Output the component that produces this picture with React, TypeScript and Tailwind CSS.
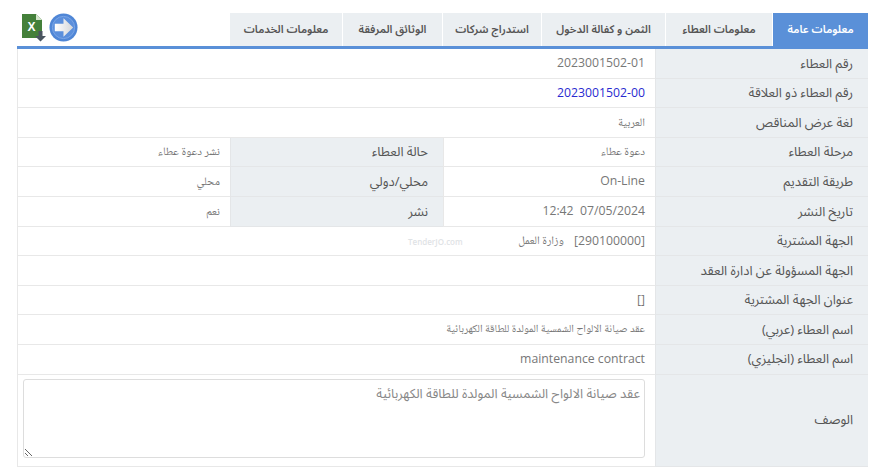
const tabs = [
  { label: 'معلومات عامة', width: 'w-[96px]', active: true },
  { label: 'معلومات العطاء', width: 'w-[107px]' },
  { label: 'الثمن و كفالة الدخول', width: 'w-[124px]' },
  { label: 'استدراج شركات', width: 'w-[99px]' },
  { label: 'الوثائق المرفقة', width: 'w-[100px]' },
  { label: 'معلومات الخدمات', width: 'w-[113px]' },
]

const label = 'flex items-center bg-[#ebeff2] pr-[15px] text-[13px] text-[#555] border-b border-l border-[#e4e6e8]'
const cell = 'flex items-center px-[10px] text-[12.25px] text-[#777] border-b border-l border-[#e8e8e8]'
const small = 'pt-[2px] text-[11.5px] text-[#777] font-["Noto_Naskh_Arabic",serif]'

function ExcelIcon() {
  return (
    <svg width="25" height="29" viewBox="0 0 25 29">
      <path d="M0 1h14l6 6v18H0z" fill="#44803a" />
      <path d="M14 1v6h6z" fill="#d5e6cd" />
      <text x="5.500" y="18" fill="#fff" fontSize="12" fontWeight="700" fontFamily="Liberation Sans">X</text>
      <path d="M16.500 18h4v5h3.500l-5.500 5.500L13 23h3.500z" fill="#4a5560" />
    </svg>
  )
}

function ArrowIcon() {
  return (
    <svg width="29" height="29" viewBox="0 0 30 30">
      <defs>
        <linearGradient id="arrow-fill" x1="0" y1="0" x2="1" y2="0">
          <stop offset="0" stopColor="#ffffff" />
          <stop offset="1" stopColor="#d4d6da" />
        </linearGradient>
      </defs>
      <circle cx="15" cy="15" r="14.500" fill="#4f86d6" />
      <circle cx="15" cy="15" r="11.500" fill="#5b8fdc" stroke="#7ba6e6" strokeWidth="1" />
      <path d="M6 11h9V5.500L25 15l-10 9.500V19H6z" fill="url(#arrow-fill)" />
    </svg>
  )
}

function Row({ name, children, className = 'h-[29.6px]', cellClass = '' }: { name: string; children?: React.ReactNode; className?: string; cellClass?: string }) {
  return (
    <div className={`grid grid-cols-[213px_1fr] ${className}`}>
      <div className={label}>{name}</div>
      <div className={`${cell} ${cellClass}`}>{children}</div>
    </div>
  )
}

function FourRow({ name, value, name2, value2 }: { name: string; value: React.ReactNode; name2: string; value2: string }) {
  return (
    <div className="grid h-[29.6px] grid-cols-[213px_212px_213px_1fr]">
      <div className={label}>{name}</div>
      <div className={cell}>{value}</div>
      <div className={label}>{name2}</div>
      <div className={cell}><span className={small}>{value2}</span></div>
    </div>
  )
}

export default function App() {
  return (
    <div dir="rtl" className='relative h-[475px] w-[870px] overflow-hidden bg-white pr-[2px] pl-[17px] pt-[13px] font-["Open_Sans","Noto_Sans_Arabic",sans-serif]'>
      {/* tabs */}
      <div className="flex h-[36px] border-b-[3px] border-[#5a90d8]">
        {tabs.map((t) => (
          <div
            key={t.label}
            className={`${t.width} flex items-center justify-center border-l border-white text-[11px] font-semibold ${
              t.active ? 'bg-[#5a90d8] text-white' : 'bg-[#ebeff2] text-[#555]'
            }`}
          >
            {t.label}
          </div>
        ))}
        <div dir="ltr" className="flex flex-1 items-start justify-end">
          <div className="mr-auto ml-[5px] flex items-start gap-[2px]">
            <ExcelIcon />
            <ArrowIcon />
          </div>
        </div>
      </div>

      {/* details */}
      <div>
        <Row name="رقم العطاء">2023001502-01</Row>
        <Row name="رقم العطاء ذو العلاقة"><span className="text-[#2a2ad0]">2023001502-00</span></Row>
        <Row name="لغة عرض المناقص"><span className={small}>العربية</span></Row>
        <FourRow name="مرحلة العطاء" value={<span className={small}>دعوة عطاء</span>} name2="حالة العطاء" value2="نشر دعوة عطاء" />
        <FourRow name="طريقة التقديم" value="On-Line" name2="محلي/دولي" value2="محلي" />
        <FourRow name="تاريخ النشر" value={<span dir="ltr">12:42&nbsp;&nbsp;07/05/2024</span>} name2="نشر" value2="نعم" />
        <Row name="الجهة المشترية" cellClass="gap-[10px]">
          <span>[290100000]</span>
          <span className={small}>وزارة العمل</span>
        </Row>
        <Row name="الجهة المسؤولة عن ادارة العقد" />
        <Row name="عنوان الجهة المشترية">[]</Row>
        <Row name="اسم العطاء (عربي)"><span className="pt-[2px] font-['Noto_Naskh_Arabic',serif] text-[11px]">عقد صيانة الالواح الشمسية المولدة للطاقة الكهربائية</span></Row>
        <Row name="اسم العطاء (انجليزي)">maintenance contract</Row>
        <Row name="الوصف" className="h-[92px]" cellClass="items-start pl-[5px] pt-[4px]">
          <textarea
            readOnly
            value="عقد صيانة الالواح الشمسية المولدة للطاقة الكهربائية"
            className="h-[79px] w-full rounded-[3px] border border-[#ddd] px-[4px] py-[4px] text-[13px] text-[#888] outline-none"
          />
        </Row>
      </div>

      {/* site watermark */}
      <span dir="ltr" className="absolute top-[236px] left-[408px] text-[8px] font-semibold text-[#dfe3e6]">TenderJO.com</span>
    </div>
  )
}
